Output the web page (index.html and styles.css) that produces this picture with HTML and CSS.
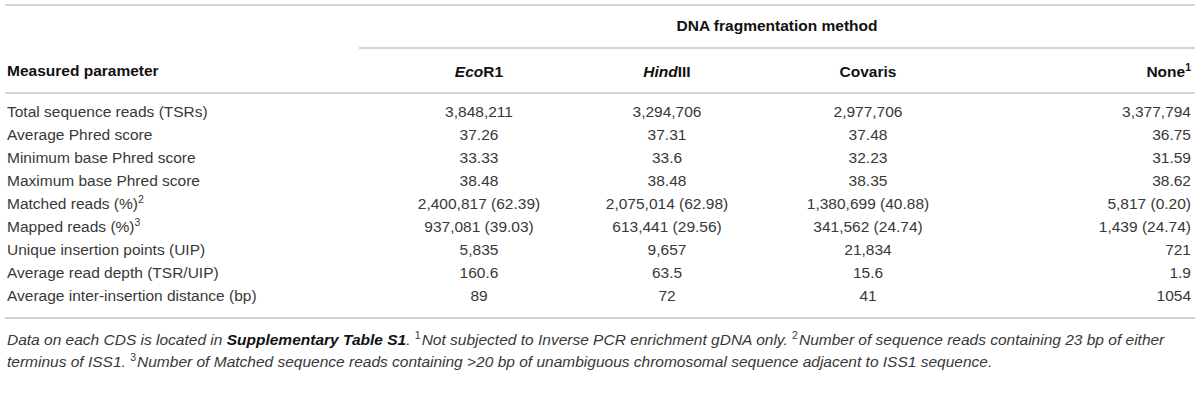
FILE: index.html
```html
<!DOCTYPE html>
<html lang="en">
<head>
    <meta charset="UTF-8">
    <title>DNA fragmentation method</title>
    <link rel="stylesheet" href="styles.css">
</head>
<body>
    <div class="table-wrap">
        <table class="data-table">
            <colgroup>
                <col class="col-param">
                <col class="col-eco">
                <col class="col-hind">
                <col class="col-cov">
                <col class="col-none">
            </colgroup>
            <thead>
                <tr class="group-row">
                    <th></th>
                    <th colspan="4" class="group-head">DNA fragmentation method</th>
                </tr>
                <tr class="head-row">
                    <th class="left">Measured parameter</th>
                    <th><i>Eco</i>R1</th>
                    <th><i>Hind</i>III</th>
                    <th>Covaris</th>
                    <th class="right">None<sup>1</sup></th>
                </tr>
            </thead>
            <tbody>
                <tr>
                    <td class="left">Total sequence reads (TSRs)</td>
                    <td>3,848,211</td>
                    <td>3,294,706</td>
                    <td>2,977,706</td>
                    <td class="right">3,377,794</td>
                </tr>
                <tr>
                    <td class="left">Average Phred score</td>
                    <td>37.26</td>
                    <td>37.31</td>
                    <td>37.48</td>
                    <td class="right">36.75</td>
                </tr>
                <tr>
                    <td class="left">Minimum base Phred score</td>
                    <td>33.33</td>
                    <td>33.6</td>
                    <td>32.23</td>
                    <td class="right">31.59</td>
                </tr>
                <tr>
                    <td class="left">Maximum base Phred score</td>
                    <td>38.48</td>
                    <td>38.48</td>
                    <td>38.35</td>
                    <td class="right">38.62</td>
                </tr>
                <tr>
                    <td class="left">Matched reads (%)<sup>2</sup></td>
                    <td>2,400,817 (62.39)</td>
                    <td>2,075,014 (62.98)</td>
                    <td>1,380,699 (40.88)</td>
                    <td class="right">5,817 (0.20)</td>
                </tr>
                <tr>
                    <td class="left">Mapped reads (%)<sup>3</sup></td>
                    <td>937,081 (39.03)</td>
                    <td>613,441 (29.56)</td>
                    <td>341,562 (24.74)</td>
                    <td class="right">1,439 (24.74)</td>
                </tr>
                <tr>
                    <td class="left">Unique insertion points (UIP)</td>
                    <td>5,835</td>
                    <td>9,657</td>
                    <td>21,834</td>
                    <td class="right">721</td>
                </tr>
                <tr>
                    <td class="left">Average read depth (TSR/UIP)</td>
                    <td>160.6</td>
                    <td>63.5</td>
                    <td>15.6</td>
                    <td class="right">1.9</td>
                </tr>
                <tr>
                    <td class="left">Average inter-insertion distance (bp)</td>
                    <td>89</td>
                    <td>72</td>
                    <td>41</td>
                    <td class="right">1054</td>
                </tr>
            </tbody>
        </table>

        <!-- notas al pie de la tabla -->
        <p class="footnote">Data on each CDS is located in <b>Supplementary Table S1</b>. <sup>1</sup>Not subjected to Inverse PCR enrichment gDNA only. <sup>2</sup>Number of sequence reads containing 23 bp of either terminus of ISS1. <sup>3</sup>Number of Matched sequence reads containing &gt;20 bp of unambiguous chromosomal sequence adjacent to ISS1 sequence.</p>
    </div>
</body>
</html>
```

FILE: styles.css
```css
:root {
    --line-color: #d2d2d2;
    --text-color: #383838;
    --head-color: #111;
}

body, html {
    margin: 0;
    padding: 0;
    background: #ffffff;
    font-family: "Liberation Sans", Arial, sans-serif;
    color: var(--text-color);
}

.table-wrap {
    padding: 4px 5px 0 5px;
}

.data-table {
    width: 100%;
    border-collapse: collapse;
    border-top: 2px solid var(--line-color);
    font-size: 15.5px;
    line-height: 23px;
}

.col-param { width: 354px; }
.col-eco { width: 240px; }
.col-hind { width: 136px; }
.col-cov { width: 266px; }
.col-none { width: 194px; }

.data-table th,
.data-table td {
    padding: 0 2px;
    text-align: center;
    font-weight: normal;
    white-space: nowrap;
}

.data-table th {
    font-weight: 700;
    color: var(--head-color);
}

.data-table .left { text-align: left; }
.data-table .right { text-align: right; padding-right: 4px; }

/* exponentes sin mover la línea */
sup {
    font-size: 10.5px;
    line-height: 1;
    vertical-align: baseline;
    position: relative;
    top: -6px;
}

.footnote sup {
    font-style: normal;
    margin-right: 1px;
}

.group-row th {
    height: 38px;
    padding-bottom: 3px;
}

.group-head {
    border-bottom: 2px solid var(--line-color);
}

.head-row th {
    height: 42px;
    padding-top: 1px;
    border-bottom: 2px solid var(--line-color);
}

.data-table tbody tr:first-child td {
    padding-top: 6px;
}

.data-table tbody tr:last-child td {
    padding-bottom: 10px;
    border-bottom: 2px solid var(--line-color);
}

.footnote {
    margin: 0;
    padding: 10px 2px 0 2px;
    font-size: 15.5px;
    line-height: 22px;
    font-style: italic;
    color: var(--text-color);
}

.footnote b {
    color: var(--head-color);
}
```
